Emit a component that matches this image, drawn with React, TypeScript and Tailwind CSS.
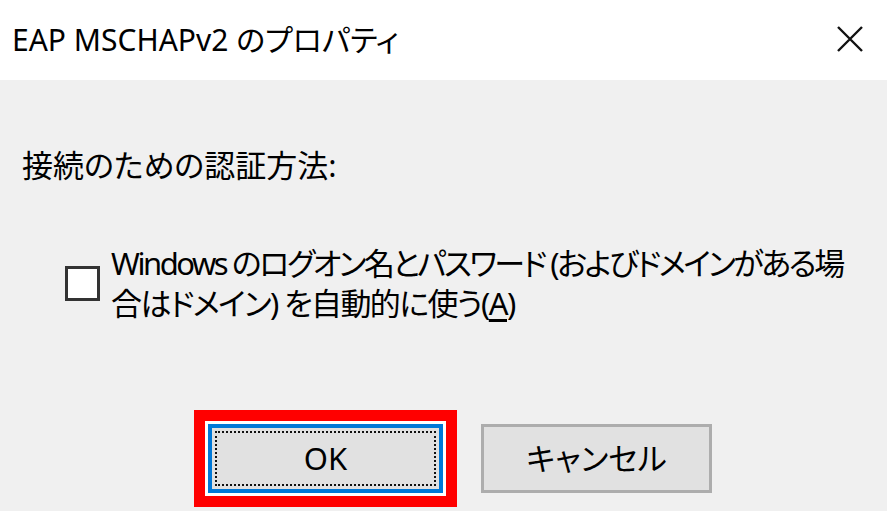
export default function App() {
  return (
    <div className="flex h-[511px] w-[887px] flex-col overflow-hidden bg-[#f0f0f0] font-['Noto_Sans','Noto_Sans_CJK_JP',sans-serif] text-black [font-feature-settings:'palt']">
      <div className="flex h-[80px] shrink-0 items-center justify-between bg-white pl-[12px] pr-[24px]">
        <span className="text-[30px] leading-none">EAP MSCHAPv2 のプロパティ</span>
        <svg width="26" height="26" viewBox="0 0 26 26" className="mb-[2px]">
          <path d="M1 1 L25 25 M25 1 L1 25" stroke="#111" strokeWidth="2.4" />
        </svg>
      </div>

      <div className="flex flex-1 flex-col">
        <p className="mt-[65px] pl-[22px] text-[31px] leading-[40px]">接続のための認証方法:</p>

        <label className="mt-[58px] flex items-center gap-[11px] pl-[65px]">
          <span className="h-[35px] w-[35px] shrink-0 border-[3px] border-[#333] bg-white" />
          <span className="flex flex-col whitespace-nowrap text-[31px] leading-[40px]">
            <span className="tracking-[-2.45px]">Windows のログオン名とパスワード (およびドメインがある場</span>
            <span className="tracking-[-1.6px]">
              合はドメイン) を自動的に使う(<span className="underline underline-offset-4">A</span>)
            </span>
          </span>
        </label>

        <div className="mt-auto mb-[4px] flex items-center pl-[194px]">
          <div className="border-[11px] border-[#ff0000] bg-white p-[3px]">
            <button className="flex h-[69px] w-[235px] items-center justify-center border-[4px] border-[#0078d7] bg-[#e1e1e1] p-[3px]">
              <span className="flex h-full w-full items-center justify-center border-2 border-dotted border-[#111] text-[31px]">
                OK
              </span>
            </button>
          </div>
          <button className="ml-[24px] flex h-[69px] w-[231px] items-center justify-center border-[3px] border-[#adadad] bg-[#e1e1e1] text-[31px]">
            キャンセル
          </button>
        </div>
      </div>
    </div>
  );
}
